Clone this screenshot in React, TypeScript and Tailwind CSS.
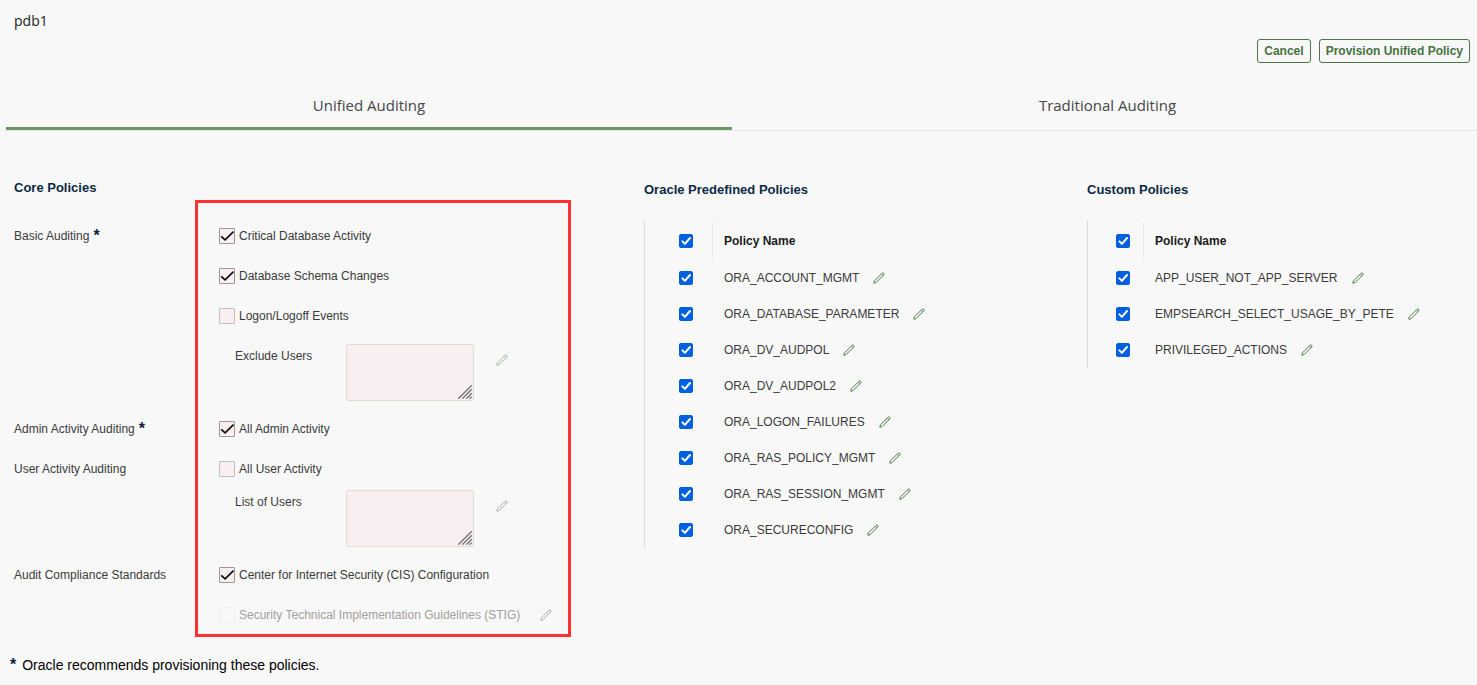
import { useState } from "react";
import type { ReactNode } from "react";

function PencilIcon() {
  return (
    <svg viewBox="0 0 12 12" className="size-3" fill="none" aria-hidden="true">
      <path
        d="M0.8 11.2 L1.3 9 L8.9 1.4 Q9.8 0.6 10.7 1.3 Q11.4 2.2 10.6 3.1 L3 10.7 Z M8.2 2.3 L9.7 3.8"
        stroke="#4f7d4a"
        strokeWidth="1"
        strokeLinejoin="round"
      />
    </svg>
  );
}

function EditButton({ label, disabled = false }: { label: string; disabled?: boolean }) {
  return (
    <button type="button" aria-label={label} disabled={disabled} className="block size-3 shrink-0 disabled:opacity-50">
      <PencilIcon />
    </button>
  );
}

type CoreCheckProps = { id: string; label: string; checked?: boolean; disabled?: boolean };

function CoreCheck({ id, label, checked = false, disabled = false }: CoreCheckProps) {
  const [on, setOn] = useState(checked);
  return (
    <div className="flex items-center gap-1">
      <span className="grid size-4 shrink-0">
        <input
          id={id}
          type="checkbox"
          checked={on}
          disabled={disabled}
          onChange={(e) => setOn(e.target.checked)}
          className="col-start-1 row-start-1 size-4 appearance-none rounded-[1px] border border-[#c0bebe] bg-[#f9eff0] checked:border-[#999999] disabled:border-[#f1efef] disabled:bg-[#f9f8f8]"
        />
        {on && (
          <svg viewBox="0 0 16 16" className="pointer-events-none col-start-1 row-start-1 size-4" fill="none" aria-hidden="true">
            <path d="M2.2 8.3 L6.1 11.9 L14.5 3.6" stroke="#0a0a0a" strokeWidth="1.6" />
          </svg>
        )}
      </span>
      <label htmlFor={id} className={disabled ? "text-[#a3a0a0]" : undefined}>
        {label}
      </label>
    </div>
  );
}

function Star() {
  return <span className="text-base leading-4 font-bold text-[#0b2239]">*</span>;
}

function CoreRow({ label, starred = false, children }: { label?: string; starred?: boolean; children: ReactNode }) {
  return (
    <div className="flex h-10 items-center">
      <div className="flex w-[205px] shrink-0 items-center gap-1">
        {label}
        {starred && <Star />}
      </div>
      <div className="flex items-center gap-5">{children}</div>
    </div>
  );
}

function UserField({ id, label }: { id: string; label: string }) {
  return (
    <div className="flex items-start pb-2 pl-[221px]">
      <label htmlFor={id} className="w-[111px] shrink-0 pt-1">
        {label}
      </label>
      <div className="relative mr-[22px]">
        <textarea
          id={id}
          className="block h-[57px] w-32 resize-none rounded-[2px] border border-[#dfdecf] bg-[#f9eff0] p-1"
        />
        <svg viewBox="0 0 14 14" className="pointer-events-none absolute right-0.5 bottom-0.5 size-3.5" fill="none" aria-hidden="true">
          <path d="M0.3 13.7 L13.7 0.3 M4.3 13.7 L13.7 4.3 M8.3 13.7 L13.7 8.3 M11.6 13.7 L13.7 11.6" stroke="#6f6f76" strokeWidth="1.3" />
        </svg>
      </div>
      <div className="pt-2.5">
        <EditButton label={`Edit ${label}`} disabled />
      </div>
    </div>
  );
}

function TableCheck({ label }: { label: string }) {
  const [on, setOn] = useState(true);
  return (
    <span className="grid size-3.5">
      <input
        type="checkbox"
        aria-label={label}
        checked={on}
        onChange={(e) => setOn(e.target.checked)}
        className="col-start-1 row-start-1 size-3.5 appearance-none rounded-[2px] border border-[#8f8f9d] bg-white checked:border-[#0060df] checked:bg-[#0060df]"
      />
      {on && (
        <svg viewBox="0 0 14 14" className="pointer-events-none col-start-1 row-start-1 size-3.5" fill="none" aria-hidden="true">
          <path d="M3.4 7.4 L5.9 9.9 L11 4" stroke="#ffffff" strokeWidth="2" strokeLinecap="round" strokeLinejoin="round" />
        </svg>
      )}
    </span>
  );
}

type PolicyTableProps = { title: string; names: string[]; wide?: boolean };

function PolicyTable({ title, names, wide = false }: PolicyTableProps) {
  const pad = wide ? "pl-[34px]" : "pl-7";
  return (
    <section className="pt-0.5">
      <h2 className="text-[13px] leading-4 font-bold text-[#0b2a45]">{title}</h2>
      <table className="mt-[23px] border-separate border-spacing-0 border-l border-[#dcdcdc] text-left">
        <thead>
          <tr className="h-[39px]">
            <th className={`border-r border-[#ebebeb] p-0 ${wide ? "w-[68px]" : "w-14"} ${pad}`}>
              <TableCheck label={`Select all ${title}`} />
            </th>
            <th className="p-0 pl-[11px] font-bold text-[#1a1a1a]">Policy Name</th>
          </tr>
        </thead>
        <tbody>
          {names.map((name) => (
            <tr key={name} className="h-9">
              <td className={`p-0 ${pad}`}>
                <TableCheck label={name} />
              </td>
              <td className="p-0 pl-[11px]">
                <div className="flex items-center gap-3.5">
                  {name}
                  <EditButton label={`Edit ${name}`} />
                </div>
              </td>
            </tr>
          ))}
        </tbody>
      </table>
    </section>
  );
}

const predefined = [
  "ORA_ACCOUNT_MGMT",
  "ORA_DATABASE_PARAMETER",
  "ORA_DV_AUDPOL",
  "ORA_DV_AUDPOL2",
  "ORA_LOGON_FAILURES",
  "ORA_RAS_POLICY_MGMT",
  "ORA_RAS_SESSION_MGMT",
  "ORA_SECURECONFIG",
];

const custom = ["APP_USER_NOT_APP_SERVER", "EMPSEARCH_SELECT_USAGE_BY_PETE", "PRIVILEGED_ACTIONS"];

const actionClass =
  "h-6 rounded-[3px] border border-[#4a7544] px-1.5 text-xs leading-4 font-bold whitespace-nowrap text-[#467341]";

export default function App() {
  const [tab, setTab] = useState(0);
  const tabs = ["Unified Auditing", "Traditional Auditing"];
  return (
    <div className="min-h-screen bg-[#f8f8f8] font-['Liberation_Sans',Arial,sans-serif] text-xs leading-4 text-[#3b3b3b]">
      <header>
        <h1 className="px-3.5 pt-3 text-sm leading-[18px] text-[#1a1a1a] font-['Open_Sans',sans-serif]">pdb1</h1>
        <div className="flex justify-end gap-2 pt-[9px] pr-[7px]">
          <button type="button" className={actionClass}>Cancel</button>
          <button type="button" className={actionClass}>Provision Unified Policy</button>
        </div>
      </header>

      <nav role="tablist" className="mt-[18px] ml-1.5 grid grid-cols-[726fr_745fr] border-b border-[#e6e6e6]">
        {tabs.map((name, i) => (
          <button
            key={name}
            type="button"
            role="tab"
            aria-selected={tab === i}
            onClick={() => setTab(i)}
            className="h-[49px] border-b-3 border-transparent pt-0.5 text-[15px] leading-5 text-[#474747] font-['Open_Sans',sans-serif] last:pl-1.5 aria-selected:border-[#6b9962]"
          >
            {name}
          </button>
        ))}
      </nav>

      <main className="grid grid-cols-[630fr_443fr_390fr] items-start pt-[49px] pl-3.5">
        <section>
          <h2 className="text-[13px] leading-4 font-bold text-[#0b2a45]">Core Policies</h2>
          <div className="relative mt-1 pt-4 pb-0.5">
            <CoreRow label="Basic Auditing" starred>
              <CoreCheck id="critical" label="Critical Database Activity" checked />
            </CoreRow>
            <CoreRow>
              <CoreCheck id="schema" label="Database Schema Changes" checked />
            </CoreRow>
            <CoreRow>
              <CoreCheck id="logon" label="Logon/Logoff Events" />
            </CoreRow>
            <div className="pt-2">
              <UserField id="exclude-users" label="Exclude Users" />
            </div>
            <CoreRow label="Admin Activity Auditing" starred>
              <CoreCheck id="all-admin" label="All Admin Activity" checked />
            </CoreRow>
            <CoreRow label="User Activity Auditing">
              <CoreCheck id="all-user" label="All User Activity" />
            </CoreRow>
            <div className="pt-px">
              <UserField id="list-users" label="List of Users" />
            </div>
            <CoreRow label="Audit Compliance Standards">
              <CoreCheck id="cis" label="Center for Internet Security (CIS) Configuration" checked />
            </CoreRow>
            <CoreRow>
              <CoreCheck id="stig" label="Security Technical Implementation Guidelines (STIG)" disabled />
              <EditButton label="Edit STIG" disabled />
            </CoreRow>
            <div className="pointer-events-none absolute inset-y-0 left-[181px] w-[376px] border-3 border-[#fb3131]" />
          </div>
        </section>
        <PolicyTable title="Oracle Predefined Policies" names={predefined} wide />
        <PolicyTable title="Custom Policies" names={custom} />
      </main>

      <footer className="flex items-center gap-1.5 px-2.5 pt-5 text-sm leading-4 text-black">
        <Star />
        <p>Oracle recommends provisioning these policies.</p>
      </footer>
    </div>
  );
}
